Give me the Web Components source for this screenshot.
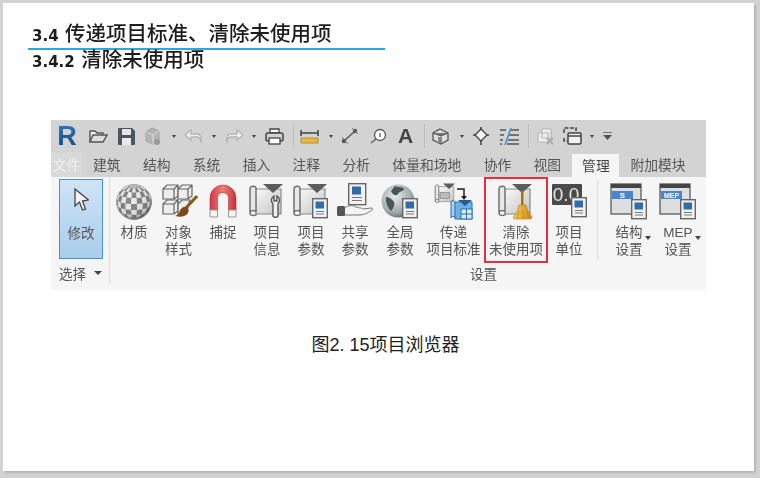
<!DOCTYPE html>
<html lang="zh">
<head>
<meta charset="utf-8">
<title>3.4.2</title>
<style>
html, body { margin: 0; height: 100%; background: #d2d2d2; overflow: hidden; }
body { font-family: "Liberation Sans", "Noto Sans CJK SC", sans-serif; }
</style>
</head>
<body>
<doc-slide>
  <slide-heading slot="heading"></slide-heading>
  <revit-ribbon slot="figure"></revit-ribbon>
  <span slot="caption">图2. 15项目浏览器</span>
</doc-slide>

<script>
// shared pieces of the "project" icons: scroll with the dark fold on top
const scroll = `
  <path d="M6 6h27v25H8z" fill="url(#sheet)" stroke="#8a8a8a" stroke-width="1.200"/>
  <path d="M2 6c0-3 5-4 6-1v24c-1-2-6-2-6 1z" fill="#e8e8e8" stroke="#707070" stroke-width="1.500"/>
  <path d="M2 30c0 3 5 3 7 1" fill="none" stroke="#707070" stroke-width="1.500"/>
  <path d="M15 1h20l-10 9z" fill="#5c5c5c"/>`;
const grad = `<defs><linearGradient id="sheet" x1="0" y1="0" x2="1" y2="1"><stop offset="0" stop-color="#fafafa"/><stop offset="1" stop-color="#c4c4c4"/></linearGradient></defs>`;
const doc = (x, y) => `<g transform="translate(${x} ${y})">
  <rect x=".7" y=".7" width="14.600" height="19" fill="#f2f2f2" stroke="#666" stroke-width="1.400"/>
  <rect x="3.500" y="3.500" width="8.500" height="7" fill="#2f6da8"/>
  <path d="M4 13.500h8M4 16h8" stroke="#777"/></g>`;
const win = (tag, fill) => `
  <rect x="1" y="1" width="30" height="30" fill="#dedede" stroke="#666" stroke-width="1.400"/>
  <rect x="1" y="1" width="30" height="4" fill="#444"/>
  <rect x="2" y="8" width="21" height="8" fill="${fill}"/>
  <text x="12.500" y="15" font-size="${tag.length > 1 ? 7 : 8}" font-weight="700" font-family="Liberation Sans" text-anchor="middle" fill="#fff">${tag}</text>`;

// checker ball: cells projected onto a sphere
function checkerBall() {
  const r = 17.5, tilt = -0.3;
  const pt = (lat, lon) => {
    const x = Math.cos(lat) * Math.sin(lon), y = Math.sin(lat), z = Math.cos(lat) * Math.cos(lon);
    const yy = y * Math.cos(tilt) - z * Math.sin(tilt);
    return (19 + r * x).toFixed(1) + ' ' + (19 + r * yy).toFixed(1);
  };
  const step = Math.PI / 9;
  let d = '';
  for (let i = -4; i < 5; i++) {
    for (let j = -4; j < 5; j++) {
      if ((i + j) & 1) continue;
      const a = (i - .5) * step, b = (j - .5) * step;
      d += `M${pt(a, b)}L${pt(a, b + step)}L${pt(a + step, b + step)}L${pt(a + step, b)}Z`;
    }
  }
  return d;
}

const ICONS = {
  material: `<svg width="38" height="38" viewBox="0 0 38 38">
    <defs><radialGradient id="sh" cx=".42" cy=".38" r=".62"><stop offset="0" stop-color="#fff" stop-opacity=".15"/><stop offset=".78" stop-color="#888" stop-opacity=".2"/><stop offset="1" stop-color="#444" stop-opacity=".7"/></radialGradient></defs>
    <circle cx="19" cy="19" r="17.500" fill="#ececec"/>
    <path d="${checkerBall()}" fill="#777"/>
    <circle cx="19" cy="19" r="17.500" fill="url(#sh)" stroke="#777" stroke-width=".6"/></svg>`,
  style: `<svg width="38" height="38" viewBox="0 0 38 38">
    <g fill="#eee" stroke="#666" stroke-width="1.200">
      <path d="M3 6l4-4h11v11l-4 3H3zM3 6h11v10M14 6l4-4"/>
      <path d="M18 6l4-4h10v11l-4 3H18zM18 6h10v10M28 6l4-4"/>
      <path d="M3 21l4-4h11v11l-4 3H3zM3 21h11v10M14 21l4-4"/>
      <path d="M18 21l4-4h8l-4 14h-8z"/>
    </g>
    <path d="M37 13L25 26" stroke="#8a5a1c" stroke-width="3"/>
    <path d="M27 24c-5-1-7 3-8 6-1 2-4 3-4 3 6 2 11 0 13-3 1-2 1-4-1-6z" fill="#7a4a1a"/></svg>`,
  magnet: `<svg width="30" height="36" viewBox="0 0 30 36">
    <defs><linearGradient id="mg" x1="0" x2="1"><stop offset="0" stop-color="#d23a45"/><stop offset=".5" stop-color="#ef7c7c"/><stop offset="1" stop-color="#c9303c"/></linearGradient></defs>
    <path d="M2 27V15a13 13 0 0 1 26 0v12h-7.500V15a5.500 5.500 0 0 0-11 0v12z" fill="url(#mg)" stroke="#a33" stroke-width=".6"/>
    <path d="M2 27h7.500v7H2zM20.500 27H28v7h-7.500z" fill="#f4f4f4" stroke="#999"/></svg>`,
  info: `<svg width="38" height="38" viewBox="0 0 38 38">${grad}${scroll}
    <path d="M26 13a5 5 0 0 0-1 8v12a3 3 0 0 0 5 0V21a5 5 0 0 0-1-8v5h-3z" fill="#f2f2f2" stroke="#555" stroke-width="1.400"/></svg>`,
  params: `<svg width="38" height="38" viewBox="0 0 38 38">${grad}${scroll}${doc(20, 15)}</svg>`,
  shared: `<svg width="38" height="38" viewBox="0 0 38 38">
    <g transform="translate(12 0)"><rect x=".7" y=".7" width="17" height="21" fill="#f2f2f2" stroke="#666" stroke-width="1.400"/><rect x="4" y="3.500" width="9" height="8" fill="#2f6da8"/><path d="M4 14.500h10M4 17.500h10" stroke="#777"/></g>
    <path d="M8 25c5-3 9-3 12-1 3 1 7 1 7 2l8-1c2 0 2 2 1 2-3 2-7 5-12 5H8z" fill="#f4f4f4" stroke="#777"/>
    <rect x="1" y="23" width="8" height="10" rx="1.500" fill="#555"/></svg>`,
  globe: `<svg width="38" height="38" viewBox="0 0 38 38">
    <defs><radialGradient id="gl" cx=".4" cy=".35" r=".7"><stop offset="0" stop-color="#e6ebea"/><stop offset=".7" stop-color="#a0abaa"/><stop offset="1" stop-color="#5f6c6c"/></radialGradient></defs>
    <circle cx="17" cy="18" r="16.500" fill="url(#gl)"/>
    <path d="M14 3c4 2 7 0 9 3-1 3-5 2-6 5-2 3-6 0-7-3zM5 14c3 0 6 2 8 5 1 3-1 7-3 9-3-3-6-9-5-14z" fill="#4a5656"/>
    ${doc(21, 15)}</svg>`,
  transfer: `<svg width="40" height="38" viewBox="0 0 40 38">
    <g transform="scale(.6)">${grad}${scroll}<rect x="10" y="16" width="16" height="10" fill="#bbb" stroke="#777"/></g>
    <path d="M23 6h7v8" fill="none" stroke="#222" stroke-width="1.500"/><path d="M27 13h6l-3 4z" fill="#222"/>
    <g transform="translate(16 16)">
      <path d="M3 3h19v17H5z" fill="#6fb0e6" stroke="#2c6ea8"/>
      <path d="M1 3c0-2 3-2 4 0v15c-1-1-4-1-4 1z" fill="#a9cfee" stroke="#2c6ea8"/>
      <path d="M8 1h14l-7 6z" fill="#1f5f99"/>
      <rect x="11" y="10" width="11" height="10" fill="#dcecf8" stroke="#2c6ea8"/>
      <path d="M11 15h11M16.500 10v10" stroke="#2c6ea8"/>
    </g></svg>`,
  purge: `<svg width="38" height="38" viewBox="0 0 38 38">${grad}${scroll}
    <defs><linearGradient id="br" x1="0" x2="1"><stop offset="0" stop-color="#f6cc55"/><stop offset="1" stop-color="#cf8c18"/></linearGradient></defs>
    <rect x="24" y="8" width="2.500" height="16" fill="#a8701a"/>
    <path d="M22 22h7c1 5 4 9 6 12l-1 2H17l-1-2c3-3 5-7 6-12z" fill="url(#br)" stroke="#b9801c" stroke-width=".6"/>
    <path d="M22 28l-2 8M26 28v8M30 28l2 8" stroke="#b9801c" stroke-width=".7"/></svg>`,
  units: `<svg width="36" height="38" viewBox="0 0 36 38">
    <rect x="1" y="1" width="30" height="21" rx="1" fill="#4a4a4a"/>
    <text x="15" y="18" font-size="19" font-family="Liberation Sans" text-anchor="middle" fill="#e6e6e6">0.0</text>
    ${doc(20, 14)}</svg>`,
  struct: `<svg width="38" height="38" viewBox="0 0 38 38">${win('S', '#4a86cf')}${doc(21, 16)}</svg>`,
  mep: `<svg width="38" height="38" viewBox="0 0 38 38">${win('MEP', '#4a86cf')}${doc(21, 16)}</svg>`
};

// left edge of each toolbar item in ribbon coordinates
const QUICK = [
  { x: 7, w: 18, html: `<span class="logo">R</span>` },
  { x: 38, w: 19, html: `<svg width="19" height="16" viewBox="0 0 19 16"><path d="M1 14V3h5l2 2h6v2" fill="#eee" stroke="#555" stroke-width="1.400"/><path d="M1 14l3-7h14l-4 7z" fill="#ddd" stroke="#555" stroke-width="1.400"/></svg>` },
  { x: 67, w: 17, html: `<svg width="17" height="17" viewBox="0 0 17 17"><path d="M0 1a1 1 0 0 1 1-1h13l3 3v13a1 1 0 0 1-1 1H1a1 1 0 0 1-1-1z" fill="#4d5560"/><rect x="4" y="1" width="9" height="6" fill="#e4e4e4"/><rect x="4" y="10" width="9" height="7" fill="#e9e9e9"/></svg>` },
  { x: 93, w: 17, html: `<svg width="17" height="19" viewBox="0 0 17 19"><path d="M8 1l7 3v9l-6 4-7-3V5z" fill="#b4b4b4" stroke="#a0a0a0"/><path d="M2 5l7 3 6-4M9 8v9" fill="none" stroke="#dedede"/><circle cx="13" cy="15" r="3" fill="#999"/></svg>` },
  { x: 121, w: 5, dot: 1 },
  { x: 134, w: 19, html: `<svg width="19" height="15" viewBox="0 0 19 15"><path d="M7 1L1 6l6 5V8h6c3 0 4 2 4 6 1-5 0-9-4-9H7z" fill="#eee" stroke="#b5b5b5" stroke-width="1.300"/></svg>` },
  { x: 162, w: 5, dot: 1 },
  { x: 176, w: 19, html: `<svg width="19" height="15" viewBox="0 0 19 15"><path d="M12 1l6 5-6 5V8H6c-3 0-4 2-4 6-1-5 0-9 4-9h6z" fill="#eee" stroke="#b5b5b5" stroke-width="1.300"/></svg>` },
  { x: 203, w: 5, dot: 1 },
  { x: 217, w: 19, html: `<svg width="19" height="17" viewBox="0 0 19 17"><path d="M5 1h9v4H5z" fill="#fff" stroke="#444" stroke-width="1.300"/><rect x="1" y="5" width="17" height="8" rx="2" fill="#cfd3d6" stroke="#444" stroke-width="1.500"/><rect x="4" y="10" width="11" height="6" fill="#fff" stroke="#444" stroke-width="1.300"/></svg>` },
  { x: 245, w: 1, sep: 1 },
  { x: 252, w: 19, html: `<svg width="19" height="15" viewBox="0 0 19 15"><path d="M1 4h17M1 1v6M18 1v6" stroke="#444" stroke-width="1.500" fill="none"/><rect x="1" y="9" width="17" height="5" fill="#e9b93c" stroke="#a9862a" stroke-width=".8"/></svg>` },
  { x: 281, w: 5, dot: 1 },
  { x: 294, w: 18, html: `<svg width="18" height="18" viewBox="0 0 18 18"><path d="M3 14L14 4" stroke="#555" stroke-width="1.400"/><circle cx="3" cy="14" r="2.200" fill="#555"/><circle cx="14" cy="4" r="2.200" fill="#555"/><path d="M1 10l6 7M11 1l6 6" stroke="#777"/></svg>` },
  { x: 322, w: 18, html: `<svg width="18" height="16" viewBox="0 0 18 16"><circle cx="11" cy="7" r="5.500" fill="#fff" stroke="#555" stroke-width="1.300"/><path d="M11 5v4" stroke="#333"/><path d="M7 11l-5 4" stroke="#555" stroke-width="1.300"/></svg>` },
  { x: 351, w: 15, html: `<span class="letter">A</span>` },
  { x: 377, w: 1, sep: 1 },
  { x: 385, w: 17, html: `<svg width="17" height="17" viewBox="0 0 17 17"><path d="M8 1l8 4v7l-7 4-8-4V5z" fill="#ddd" stroke="#555" stroke-width="1.300"/><path d="M1 5l8 3 7-3" fill="#777" stroke="#555"/><rect x="6" y="9" width="4" height="6" fill="#888"/></svg>` },
  { x: 413, w: 5, dot: 1 },
  { x: 427, w: 16, html: `<svg width="16" height="18" viewBox="0 0 16 18"><path d="M0 8h3M13 8h3M8 0v3M8 13v5" stroke="#444" stroke-width="1.500"/><path d="M8 2l6 6-6 6-6-6z" fill="#f4f4f4" stroke="#444" stroke-width="1.400"/></svg>` },
  { x: 454, w: 19, html: `<svg width="19" height="17" viewBox="0 0 19 17"><path d="M0 2h6M10 2h9M0 7h4M9 7h10M0 12h3M8 12h11M0 16h2M7 16h12" stroke="#555" stroke-width="1.700"/><path d="M11 0L5 17" stroke="#3d8fe0" stroke-width="1.500"/></svg>` },
  { x: 482, w: 1, sep: 1 },
  { x: 491, w: 18, html: `<svg width="18" height="17" viewBox="0 0 18 17"><path d="M5 1h9v9H5zM1 5h10v9H1z" fill="#eee" stroke="#b8b8b8" stroke-width="1.200"/><path d="M10 10l6 6M16 10l-6 6" stroke="#aaa" stroke-width="2"/></svg>` },
  { x: 517, w: 19, html: `<svg width="19" height="18" viewBox="0 0 19 18"><path d="M1 6V1h12v3M1 11v3h3" fill="none" stroke="#444" stroke-width="1.500" stroke-dasharray="4 1.500"/><rect x="5" y="6" width="13" height="11" rx="1" fill="#f2f2f2" stroke="#444" stroke-width="1.500"/><path d="M5 9h13" stroke="#444" stroke-width="1.500"/></svg>` },
  { x: 544, w: 5, dot: 1 },
  { x: 558, w: 9, html: `<svg width="9" height="8" viewBox="0 0 9 8"><path d="M0 0h9" stroke="#555" stroke-width="1.500"/><path d="M0 3h9L4.500 8z" fill="#555"/></svg>` }
];

const TABS = ['建筑', '结构', '系统', '插入', '注释', '分析', '体量和场地', '协作', '视图', '管理', '附加模块'];

class DocSlide extends HTMLElement {
  connectedCallback() {
    this.attachShadow({ mode: 'open' });
    this.shadowRoot.innerHTML = `
      <style>
        :host {
          display: block;
          box-sizing: border-box;
          width: 751px;
          height: 468px;
          margin: 3px 0 0 3px;
          padding-top: 17px;
          background: #fff;
          box-shadow: 2px 2px 2px #b4b4b4;
        }
        slot[name="heading"] { display: block; height: 52px; }
        .figure { margin: 48px 0 0 48px; }
        .caption {
          margin-top: 42px;
          padding-left: 308.500px;
          font-size: 18px;
          line-height: 26px;
          color: #222;
        }
      </style>
      <slot name="heading"></slot>
      <div class="figure"><slot name="figure"></slot></div>
      <div class="caption"><slot name="caption"></slot></div>
    `;
  }
}

class SlideHeading extends HTMLElement {
  connectedCallback() {
    this.attachShadow({ mode: 'open' });
    this.shadowRoot.innerHTML = `
      <style>
        :host {
          display: block;
          margin-left: 25px;
          padding-top: 2px;
          font-family: "DejaVu Sans", "Noto Sans CJK SC", sans-serif;
          font-size: 20.500px;
          font-weight: 500;
          color: #1c1c1c;
          filter: blur(.3px);
        }
        div { padding-left: 4px; white-space: nowrap; }
        b { font-size: 15px; }
        .main { width: 353px; height: 26px; line-height: 24px; border-bottom: 2px solid #2aa9e0; }
        .sub { height: 22px; line-height: 20px; }
      </style>
      <div class="main"><b>3.4</b> 传递项目标准、清除未使用项</div>
      <div class="sub"><b>3.4.2</b> 清除未使用项</div>
    `;
  }
}

class RibbonTool extends HTMLElement {
  connectedCallback() {
    this.attachShadow({ mode: 'open' });
    const arrow = this.hasAttribute('menu') ? '<i></i>' : '';
    this.shadowRoot.innerHTML = `
      <style>
        :host {
          display: block;
          position: relative;
          box-sizing: border-box;
          width: ${this.getAttribute('w')}px;
          height: 86px;
          padding-top: 3px;
          text-align: center;
          font-family: "Liberation Sans", "Noto Sans CJK SC", sans-serif;
          font-size: 13.500px;
          line-height: 17px;
          color: #555;
          white-space: nowrap;
        }
        :host([selected]) { border: 2px solid #e5303d; padding-top: 1px; }
        .icon { height: 44px; display: flex; justify-content: center; align-items: flex-start; }
        svg { display: block; margin-top: 3px; }
        i {
          position: absolute; right: 2px; top: 59px;
          border: 3px solid transparent; border-top: 4px solid #444; border-bottom: 0;
        }
      </style>
      <div class="icon">${ICONS[this.getAttribute('icon')]}</div>
      <slot></slot>${arrow}
    `;
  }
}

class RevitRibbon extends HTMLElement {
  connectedCallback() {
    this.attachShadow({ mode: 'open' });
    let last = 0;
    const quick = QUICK.map(q => {
      const m = q.x - last;
      last = q.x + q.w;
      if (q.dot) return `<span class="dot" style="margin-left:${m}px"></span>`;
      if (q.sep) return `<span class="sep" style="margin-left:${m}px"></span>`;
      return `<span class="qi" style="margin-left:${m}px;width:${q.w}px">${q.html}</span>`;
    }).join('');
    const tabs = TABS.map(t => `<span class="tab${t === '管理' ? ' on' : ''}">${t}</span>`).join('');
    this.shadowRoot.innerHTML = `
      <style>
        :host {
          display: block;
          width: 655px;
          height: 170px;
          background: #f5f5f5;
          font-family: "Noto Sans CJK SC", sans-serif;
          filter: blur(.4px);
        }
        .quick { display: flex; align-items: center; height: 32px; background: #d3d3d3; }
        .qi { display: flex; justify-content: center; align-items: center; height: 24px; }
        .dot { width: 0; height: 0; border: 2.500px solid transparent; border-top: 3px solid #444; border-bottom: 0; box-sizing: content-box; }
        .sep { width: 1px; height: 24px; background: #bcbcbc; }
        .logo {
          font: 700 27px/24px "Liberation Sans", sans-serif;
          background: linear-gradient(#2b75c0, #174a7c);
          -webkit-background-clip: text;
          background-clip: text;
          color: transparent;
        }
        .letter { font: 700 21px/24px "Liberation Sans", sans-serif; color: #444; }
        .tabs { display: flex; align-items: flex-end; height: 25px; background: #d3d3d3; font-size: 13.800px; color: #555; }
        .file { width: 31px; height: 25px; line-height: 25px; text-align: center; color: #f0f0f0; background: #d9d9d9; }
        .tab { box-sizing: content-box; height: 25px; line-height: 25px; padding: 0 11px; white-space: nowrap; margin-right: .3px; }
        .tab.on { height: 23px; line-height: 23px; padding: 0 9.700px; margin: 0; background: #f5f5f5; color: #444; }
        .body { display: flex; height: 113px; }
        .pick { box-sizing: border-box; width: 59px; height: 107px; padding: 2px 0 0 8px; border-right: 1px solid #dcdcdc; }
        .modify {
          box-sizing: border-box; width: 44px; height: 80px; padding-top: 8px;
          border: 1px solid #4a90d0;
          background: linear-gradient(#cfe3f6, #a9cdec);
          text-align: center; font-size: 13.500px; color: #555; line-height: 18px;
        }
        .modify svg { display: block; margin: 0 auto 11px; }
        .foot { font-size: 13.500px; line-height: 18px; color: #555; margin-top: 5px; display: flex; align-items: center; gap: 8px; }
        .foot i { border: 4px solid transparent; border-top: 4px solid #444; border-bottom: 0; }
        .tools { display: flex; margin-left: 2px; }
        .gap { width: 7px; }
        .rule { width: 1px; height: 80px; margin: 3px 7px 0 0; background: #dcdcdc; }
        .set { margin: 0 0 0 360px; font-size: 13.500px; line-height: 18px; color: #555; padding-top: 1px; }
      </style>
      <div class="quick">${quick}</div>
      <div class="tabs"><span class="file">文件</span>${tabs}</div>
      <div class="body">
        <div class="pick">
          <div class="modify">
            <svg width="15" height="24" viewBox="0 0 15 24"><path d="M1 1v17l4.500-4 3 8 3-1-3-8 6-1z" fill="#f4f4f4" stroke="#444" stroke-width="1.300"/></svg>
            修改
          </div>
          <div class="foot">选择<i></i></div>
        </div>
        <div>
          <div class="tools">
            <ribbon-tool w="44" icon="material">材质</ribbon-tool>
            <ribbon-tool w="45" icon="style">对象<br>样式</ribbon-tool>
            <ribbon-tool w="44" icon="magnet">捕捉</ribbon-tool>
            <ribbon-tool w="44" icon="info">项目<br>信息</ribbon-tool>
            <ribbon-tool w="44" icon="params">项目<br>参数</ribbon-tool>
            <ribbon-tool w="44" icon="shared">共享<br>参数</ribbon-tool>
            <ribbon-tool w="46" icon="globe">全局<br>参数</ribbon-tool>
            <ribbon-tool w="61" icon="transfer">传递<br>项目标准</ribbon-tool>
            <ribbon-tool w="64" icon="purge" selected>清除<br>未使用项</ribbon-tool>
            <ribbon-tool w="42" icon="units">项目<br>单位</ribbon-tool>
            <span class="gap"></span>
            <span class="rule"></span>
            <ribbon-tool w="48" icon="struct" menu>结构<br>设置</ribbon-tool>
            <ribbon-tool w="50" icon="mep" menu>MEP<br>设置</ribbon-tool>
          </div>
          <div class="set">设置</div>
        </div>
      </div>
    `;
  }
}

customElements.define('ribbon-tool', RibbonTool);
customElements.define('doc-slide', DocSlide);
customElements.define('slide-heading', SlideHeading);
customElements.define('revit-ribbon', RevitRibbon);
</script>
</body>
</html>
